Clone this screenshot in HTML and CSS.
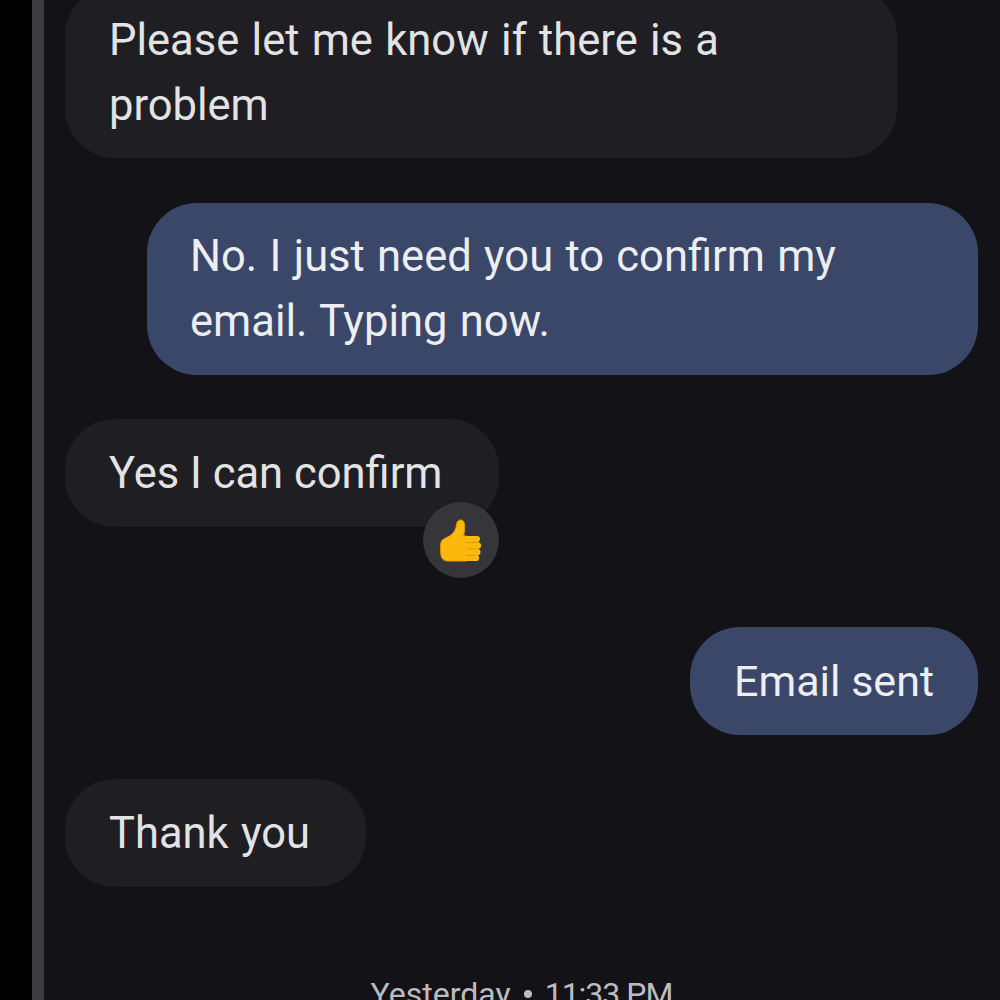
FILE: index.html
```html
<html lang="en">
<head>
    <meta charset="UTF-8">
    <meta name="viewport" content="width=device-width, initial-scale=1.0">
    <title>Messages</title>
    <link rel="stylesheet" href="styles.css">
</head>
<body>
    <div class="screen">
        <div class="scrollbar"></div>
        <div class="thread">
            <div class="bubble incoming first">Please let me know if there is a problem</div>
            <div class="bubble outgoing wide">No. I just need you to confirm my email. Typing now.</div>
            <div class="bubble incoming has-reaction">
                Yes I can confirm
                <div class="reaction">
                    <svg width="46" height="46" viewBox="0 0 46 46">
                        <path d="M23 3c-2.500 0-4 1.500-4.300 4-.5 4.500-2.200 8-5 10.500-2.600 2.300-8.700 4-10.200 6.500-1.300 2.200-1.300 13 0 16 .9 2.300 3 4 6 4h19V19h-2.800c.6-3.400.9-6.400.9-10 0-3.500-1.200-6-3.600-6z" fill="#fdb80c" stroke="#e59a00" stroke-width="1"/>
                        <path d="M27 19h12c2 0 3 1.300 3 3 0 1.500-.8 2.500-2 3 2 .4 3.200 1.600 3.200 3.500s-1.200 3-2.700 3.400c1.300.5 2 1.700 2 3.100 0 1.800-1 2.900-2.600 3.400.9.600 1.300 1.500 1.300 2.500 0 2-1.400 3.100-3.200 3.100H27z" fill="#fdb80c"/>
                        <path d="M28 25.500h11.500M28.500 32h11.500M28 38.500h9.500" fill="none" stroke="#e59a00" stroke-width="1.200"/>
                    </svg>
                </div>
            </div>
            <div class="bubble outgoing after-reaction short">Email sent</div>
            <div class="bubble incoming">Thank you</div>
            <div class="timestamp">
                <span>Yesterday</span>
                <span class="dot"></span>
                <span class="time">11:33 PM</span>
            </div>
        </div>
    </div>
</body>
</html>
```

FILE: styles.css
```css
html, body {
    margin: 0;
    height: 100%;
    background: #000;
}
.screen {
    display: flex;
    height: 1000px;
    overflow: hidden;
    padding-left: 32px;
    box-sizing: border-box;
    font-family: Roboto, sans-serif;
}
.scrollbar {
    width: 12px;
    flex: none;
    background: #3c3c40;
}
.thread {
    flex: 1;
    display: flex;
    flex-direction: column;
    align-items: flex-start;
    gap: 44px;
    margin-top: -14px;
    padding: 0 22px 0 21px;
    background: #131317;
    min-height: 1014px;
    box-sizing: border-box;
}
.bubble {
    font-size: 43.500px;
    word-spacing: 1.500px;
    line-height: 65px;
    padding: 22px 44px 21px;
    border-radius: 50px;
    box-sizing: border-box;
    max-width: 832px;
}
.incoming {
    background: #1f1f23;
    color: #e3e3e6;
    padding-right: 56px;
}
.outgoing {
    align-self: flex-end;
    background: #3b4768;
    color: #eceef5;
}
.first {
    padding-bottom: 20px;
    margin-bottom: 1px;
}
.wide {
    width: 831px;
    padding: 21px 44px 21px 43px;
}
.short {
    font-size: 43px;
    word-spacing: 0;
}
.has-reaction {
    position: relative;
    word-spacing: 0;
}
.after-reaction {
    margin-top: 56px;
}
.reaction {
    position: absolute;
    right: 0;
    bottom: -51px;
    width: 76px;
    height: 76px;
    border-radius: 50%;
    background: #36363a;
    display: flex;
    align-items: center;
    justify-content: center;
}
.timestamp {
    align-self: center;
    margin-top: 43px;
    font-size: 32px;
    line-height: 40px;
    color: #bcbcc0;
    white-space: nowrap;
    display: flex;
    align-items: center;
    gap: 13px;
}
.time {
    letter-spacing: -1px;
}
.dot {
    width: 8px;
    height: 8px;
    border-radius: 50%;
    background: #bcbcc0;
}
```
